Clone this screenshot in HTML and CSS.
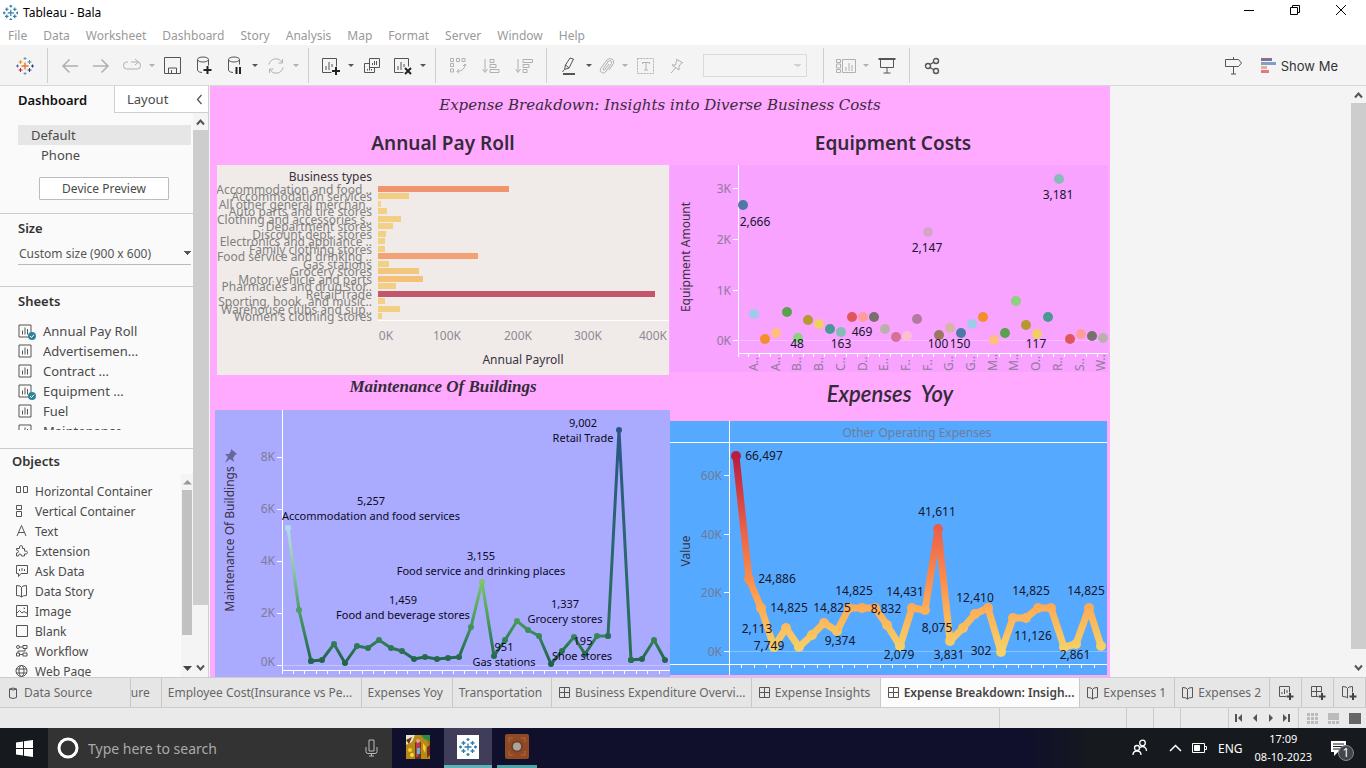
FILE: index.html
```html
<!DOCTYPE html>
<html lang="en">
<head>
<meta charset="utf-8">
<title>Tableau - Bala</title>
<link rel="stylesheet" href="styles.css">
</head>
<body>
<svg class="defs" aria-hidden="true">
  <symbol id="logo" viewBox="0 0 18 18"><path d="M9 5.500v7M5.500 9h7" stroke="#e8762c" stroke-width="1.400"/><path d="M4.500 3v4M2.500 5h4" stroke="#eb912c"/><path d="M13.500 3v4M11.500 5h4" stroke="#5b879b"/><path d="M4.500 11v4M2.500 13h4" stroke="#c72035"/><path d="M13.500 11v4M11.500 13h4" stroke="#1f447e"/><path d="M9 0v3M7.500 1.500h3" stroke="#7099a6"/><path d="M9 15v3M7.500 16.500h3" stroke="#7099a6"/><path d="M1.500 7.500v3M0 9h3" stroke="#5c6692"/><path d="M16.500 7.500v3M15 9h3" stroke="#1f447e"/></symbol>
  <symbol id="bluelogo" viewBox="0 0 18 18"><path d="M9 5.500v7M5.500 9h7M4.500 3v4M2.500 5h4M13.500 3v4M11.500 5h4M4.500 11v4M2.500 13h4M13.500 11v4M11.500 13h4M9 0v3M7.500 1.500h3M9 15v3M7.500 16.500h3M1.500 7.500v3M0 9h3M16.500 7.500v3M15 9h3" stroke="#2f7da8" stroke-width="1.300"/></symbol>
  <symbol id="sheet" viewBox="0 0 14 14"><path d="M1 1h12v12H1zM4.500 6.500v4M7 3.500v7M9.500 5v5.500" fill="none" stroke="currentColor"/></symbol>
  <symbol id="grid" viewBox="0 0 14 14"><path d="M1.500 1.500h10v10h-10zM6.500 1.500v10M1.500 6.500h10" fill="none" stroke="currentColor"/></symbol>
  <symbol id="book" viewBox="0 0 14 14"><path d="M6.500 3.500Q6 1.500 1.500 1.500v10q4 0 5 1.500 1-1.500 5-1.500v-10Q7 1.500 6.500 3.500zV13" fill="none" stroke="currentColor"/></symbol>
  <symbol id="tick" viewBox="0 0 8 8"><circle cx="4" cy="4" r="4" fill="#31839c"/><path d="M2 4l1.500 1.500L6 2.700" fill="none" stroke="#fff"/></symbol>
</svg>
<header class="titlebar">
  <svg class="app-icon" viewBox="-1 -1 20 20"><use href="#bluelogo"/></svg>
  <span class="app-name">Tableau - Bala</span>
  <div class="window-buttons">
    <button aria-label="Minimize"><svg width="12" height="12"><path d="M1 6.500h10" stroke="#000"/></svg></button>
    <button aria-label="Restore"><svg width="12" height="12" fill="none" stroke="#000"><path d="M1.500 3.500h7v7h-7zM3.500 3.500v-2h7v7h-2"/></svg></button>
    <button aria-label="Close"><svg width="12" height="12"><path d="M1 1l10 10M11 1L1 11" stroke="#000"/></svg></button>
  </div>
</header>
<nav class="menubar">
  <a href="#">File</a><a href="#">Data</a><a href="#">Worksheet</a><a href="#">Dashboard</a><a href="#">Story</a><a href="#">Analysis</a><a href="#">Map</a><a href="#">Format</a><a href="#">Server</a><a href="#">Window</a><a href="#">Help</a>
</nav>
<div class="toolbar">
  <button class="tool" aria-label="Start page"><svg width="18" height="18"><use href="#logo"/></svg></button>
  <i class="sep"></i>
  <button class="tool dim" aria-label="Undo"><svg width="18" height="16"><path d="M17 8H2M8.500 1.500L2 8l6.500 6.500" stroke-width="1.500"/></svg></button>
  <button class="tool dim" aria-label="Redo"><svg width="18" height="16"><path d="M1 8h15M9.500 1.500L16 8l-6.500 6.500" stroke-width="1.500"/></svg></button>
  <button class="tool dim" aria-label="Replay"><svg width="20" height="16"><path d="M6 4H4.500Q1.500 4 1.500 7.500T4.500 11h11q3 0 3-3.500T15.500 4H9M13 1l3.500 3L13 7"/></svg></button>
  <button class="caret dim" aria-label="Replay options"></button>
  <button class="tool" aria-label="Save"><svg width="17" height="17"><path d="M.5.500h16v16H.5zM4.500 16v-5h8v5M7.500 13v3"/></svg></button>
  <button class="tool" aria-label="New data source"><svg width="18" height="19"><ellipse cx="8" cy="3.500" rx="5.500" ry="2.500"/><path d="M2.500 3.500v11q1.500 2 4.500 2M13.500 3.500v6"/><path d="M12.500 10v8M8.500 14h8" stroke-width="2" stroke="#222"/></svg></button>
  <button class="tool" aria-label="Pause updates"><svg width="18" height="19"><ellipse cx="8" cy="3.500" rx="5.500" ry="2.500"/><path d="M2.500 3.500v11q1.500 2 4.500 2M13.500 3.500v5"/><path d="M10.500 11v7M14 11v7" stroke-width="2" stroke="#222"/></svg></button>
  <button class="caret" aria-label="Pause options"></button>
  <button class="tool dim" aria-label="Refresh"><svg width="18" height="16"><path d="M2 6.500A7 7 0 0 1 15 4.500M16 9.500A7 7 0 0 1 3 11.500M15.500 1v4h-4M2.500 15v-4h4"/></svg></button>
  <button class="caret dim" aria-label="Refresh options"></button>
  <i class="sep"></i>
  <button class="tool" aria-label="New worksheet"><svg width="20" height="18"><path d="M10.500 15.500h-9v-14h14v8M5 9v4M8 5v8M11 7v3"/><path d="M15 10v8M11 14h8" stroke-width="2" stroke="#222"/></svg></button>
  <button class="caret" aria-label="New options"></button>
  <button class="tool" aria-label="Duplicate"><svg width="18" height="18"><path d="M6.500 1.500h10v9h-10zM6.500 6.500h-5v9h10v-5M4.500 12v1.500M6.500 10v3.500M8.500 12v1.500M9.500 6v2M11.500 4v4M13.500 4v4"/></svg></button>
  <button class="tool" aria-label="Clear sheet"><svg width="20" height="18"><path d="M10.500 15.500h-9v-14h14v8M5 9v4M8 5v8M11 7v3"/><path d="M12 11l6 6M18 11l-6 6" stroke-width="2" stroke="#222"/></svg></button>
  <button class="caret" aria-label="Clear options"></button>
  <i class="sep"></i>
  <div class="sorts">
    <button class="tool dim" aria-label="Swap rows and columns"><svg width="18" height="17"><path d="M1.500 1.500h3v3h-3zM7.500 1.500h3v3h-3zM13 1.500h3v3h-3zM1.500 6.500h3v3h-3zM1.500 12h3v3h-3zM16 7q0 7-8 7.500M14 9l2-2 1.500 2M10 12l-2 2.500 2 2"/></svg></button>
    <button class="tool dim" aria-label="Sort ascending"><svg width="18" height="16"><path d="M3 1v13M.500 11L3 14.500 5.500 11M8 1.500h4v3H8zM8 6.500h6v3H8zM8 11.500h9v3H8z"/></svg></button>
    <button class="tool dim" aria-label="Sort descending"><svg width="18" height="16"><path d="M3 1v13M.500 11L3 14.500 5.500 11M8 1.500h9.500v3H8zM8 6.500h6v3H8zM8 11.500h4v3H8z"/></svg></button>
  </div>
  <i class="sep"></i>
  <button class="tool" aria-label="Highlight"><svg width="16" height="20"><path d="M9 2l3.500 1L8 12l-4.500 1.500L4.500 9zM4.500 9L8 12M3 14l-1.500 2"/><path d="M2 18h12" stroke-width="2"/></svg></button>
  <button class="caret" aria-label="Highlight options"></button>
  <button class="tool narrow dim" aria-label="Group members"><svg width="16" height="18"><path d="M4 12l5.500-8q1.500-1 2.500 0t.500 2.500L6.500 15q-2 2-4 .5t-1-4L8 3q2.500-2.500 5-1t1.500 4.500L10 13M4 12q0 1.500 1.500 1L10 7"/></svg></button>
  <button class="caret dim" aria-label="Group options"></button>
  <button class="tool dim" aria-label="Show mark labels"><svg width="18" height="16"><path d="M.5.500h16v15H.5z" stroke-dasharray="2 1"/><path d="M5.500 6V4.500h7V6M9 4.500v7.500M7 12h4"/></svg></button>
  <button class="tool dim" aria-label="Fix axes"><svg width="16" height="17"><path d="M7 2l7 4M8 3L6.500 8 3 8l7 5v-4l3-3.500M6.500 11L2 16"/></svg></button>
  <select class="fit" aria-label="Fit" disabled><option></option></select>
  <i class="sep"></i>
  <button class="tool dim" aria-label="Show cards"><svg width="22" height="16"><path d="M1.500 1.500h4v3h-4zM1.500 6h4v4h-4zM1.500 11.500h4v3h-4zM7.500 1.500h13v13h-13zM11 9v4M14 5v8M17 7v6"/></svg></button>
  <button class="caret dim" aria-label="Card options"></button>
  <button class="tool" aria-label="Presentation mode"><svg width="18" height="17"><path d="M2.500 2v8.500h13V2M9 10.500V16M5.500 16h7"/><path d="M.500 2h17" stroke-width="2"/></svg></button>
  <i class="sep"></i>
  <button class="tool" aria-label="Share"><svg width="16" height="18" stroke-width="1.400"><circle cx="4" cy="9" r="2.500"/><circle cx="12" cy="4" r="2.500"/><circle cx="12" cy="14" r="2.500"/><path d="M6 7.500L10 5M6 10.500l4 2.500"/></svg></button>
  <span class="grow"></span>
  <button class="tool" aria-label="Guide"><svg width="20" height="20"><path d="M1.500 3.500h13l3 3.500-3 3.500h-13zM9.500 1v2.500M9.500 10.500V18M7 18h5"/></svg></button>
  <button class="show-me"><svg width="15" height="16"><path d="M0 0h11v3H0z" fill="#83709a"/><path d="M0 4h15v3H0z" fill="#7f9fc9"/><path d="M0 8h6v3H0z" fill="#edac8c"/><path d="M0 12h8v3H0z" fill="#e67585"/></svg>Show Me</button>
</div>

<main class="workspace">
  <aside class="sidebar">
    <div class="pane-tabs">
      <button class="pane-tab on">Dashboard</button>
      <button class="pane-tab">Layout <svg width="7" height="11"><path d="M5.500 1L1.500 5.500l4 4.500" fill="none" stroke="#555" stroke-width="1.300"/></svg></button>
    </div>
    <div class="pane-body">
      <div class="pane">
        <section class="devices">
          <a href="#" class="device on">Default</a>
          <a href="#" class="device sub">Phone</a>
          <button class="preview">Device Preview</button>
        </section>
        <section class="size">
          <h3><label for="size">Size</label></h3>
          <select id="size"><option>Custom size (900 x 600)</option></select>
        </section>
        <section class="sheets">
          <h3>Sheets</h3>
          <ul>
            <li><svg class="ico"><use href="#sheet"/></svg><svg class="badge"><use href="#tick"/></svg>Annual Pay Roll</li>
            <li><svg class="ico"><use href="#sheet"/></svg>Advertisemen...</li>
            <li><svg class="ico"><use href="#sheet"/></svg>Contract ...</li>
            <li><svg class="ico"><use href="#sheet"/></svg><svg class="badge"><use href="#tick"/></svg>Equipment ...</li>
            <li><svg class="ico"><use href="#sheet"/></svg>Fuel</li>
            <li><svg class="ico"><use href="#sheet"/></svg>Maintenance...</li>
          </ul>
        </section>
        <section class="objects">
          <h3>Objects</h3>
          <div class="object-box">
            <ul>
              <li><svg class="ico"><path d="M1.500 2.500h4v6h-4zM8.500 2.500h4v6h-4z"/></svg>Horizontal Container</li>
              <li><svg class="ico"><path d="M1.500 1.500h5v4h-5zM1.500 7.500h5v5h-5z"/></svg>Vertical Container</li>
              <li><svg class="ico"><path d="M2 12L6.500 1.500 11 12M3.500 8.500h6"/></svg>Text</li>
              <li><svg class="ico"><path d="M1.500 12V9q2 0 2-1.500T1.500 6V4.500h3q-.5-3 1.500-3t1.500 3h2v2.500q3-.5 3 1.500t-3 1.500V12h-3q0-2-1.500-2t-1.500 2z"/></svg>Extension</li>
              <li><svg class="ico"><path d="M1.500 1.500h11v8H6l-2.500 3v-3h-2zM4.500 5v2M7 4v3M9.500 5v2"/></svg>Ask Data</li>
              <li><svg class="ico"><use href="#book"/></svg>Data Story</li>
              <li><svg class="ico"><path d="M1.500 1.500h11v11h-11zM1.500 9.500l3-3L7 9l2-1.500 3.500 2M8.500 4h1v1"/></svg>Image</li>
              <li><svg class="ico"><path d="M1.500 1.500h11v11h-11z"/></svg>Blank</li>
              <li><svg class="ico"><circle cx="3" cy="3" r="1.500"/><path d="M4.500 3H8M8 1.500h4v3H8zM10 4.500V7H3v2M1.500 9h3v3h-3zM4.500 10.500H8M8 9h4v3H8z"/></svg>Workflow</li>
              <li><svg class="ico"><circle cx="6.500" cy="7" r="5.500"/><ellipse cx="6.500" cy="7" rx="2.500" ry="5.500"/><path d="M1 5h11M1 9h11"/></svg>Web Page</li>
            </ul>
            <div class="scroll small"><svg width="9" height="6"><path d="M0 5.500L4.500 1 9 5.500z" fill="#999"/></svg><i class="thumb"></i><svg width="9" height="6"><path d="M0 0h9L4.500 5z" fill="#444"/></svg></div>
          </div>
        </section>
      </div>
      <div class="scroll"><svg width="9" height="8"><path d="M1 6.500L4.500 2.500 8 6.500"/></svg><i class="thumb"></i><svg width="9" height="8"><path d="M1 1.500l3.500 4L8 1.500"/></svg></div>
    </div>
  </aside>
  <div class="canvas">
    <article class="dashboard">
      <h1>Expense Breakdown: Insights into Diverse Business Costs</h1>
      <div class="views">
        <div class="column">
          <h2>Annual Pay Roll</h2>
          <svg id="payroll" class="chart payroll" viewBox="0 0 452 210"></svg>
          <h2 class="maint-title">Maintenance Of Buildings</h2>
          <svg id="maint" class="chart maint" viewBox="0 0 455 267">
            <defs>
              <linearGradient id="m0" gradientUnits="userSpaceOnUse" x1="0" y1="118" x2="0" y2="251"><stop stop-color="#b4dbe8"/><stop offset=".3" stop-color="#8fc8a8"/><stop offset=".6" stop-color="#4fa065"/><stop offset="1" stop-color="#246650"/></linearGradient>
              <linearGradient id="m1" gradientUnits="userSpaceOnUse" x1="0" y1="172" x2="0" y2="253"><stop stop-color="#7cc56b"/><stop offset=".45" stop-color="#4a9f58"/><stop offset=".7" stop-color="#33825a"/><stop offset="1" stop-color="#216249"/></linearGradient>
              <linearGradient id="m2" gradientUnits="userSpaceOnUse" x1="0" y1="20" x2="0" y2="250"><stop stop-color="#2b5684"/><stop offset=".5" stop-color="#2c6672"/><stop offset="1" stop-color="#287050"/></linearGradient>
            </defs>
          </svg>
        </div>
        <div class="column">
          <h2>Equipment Costs</h2>
          <svg id="equip" class="chart equip" viewBox="0 0 438 207"></svg>
          <h2 class="yoy-title">Expenses&nbsp; Yoy</h2>
          <svg id="yoy" class="chart yoy" viewBox="0 0 437 254">
            <defs>
              <linearGradient id="heat" gradientUnits="userSpaceOnUse" x1="0" y1="35" x2="0" y2="230"><stop stop-color="#b71d3e"/><stop offset=".38" stop-color="#e9624a"/><stop offset=".63" stop-color="#fb8c4c"/><stop offset=".78" stop-color="#fdad56"/><stop offset="1" stop-color="#f6d267"/></linearGradient>
            </defs>
          </svg>
        </div>
      </div>
    </article>
    <div class="scroll"><svg width="9" height="8"><path d="M1 6.500L4.500 2.500 8 6.500"/></svg><i class="thumb"></i><svg width="9" height="8"><path d="M1 1.500l3.500 4L8 1.500"/></svg></div>
  </div>
</main>

<nav class="tabs">
  <a href="#" class="source"><svg class="ico"><path d="M2.500 3v8.500q3.500 2 7 0V3Q6 1 2.500 3zQ6 5 9.500 3"/></svg>Data Source</a>
  <a href="#" class="clipped"><span>ure</span></a>
  <a href="#" class="long">Employee Cost(Insurance vs Pe...</a>
  <a href="#" class="plain">Expenses Yoy</a>
  <a href="#" class="plain">Transportation</a>
  <a href="#" class="long"><svg class="ico"><use href="#grid"/></svg>Business Expenditure Overvi...</a>
  <a href="#" class="medium"><svg class="ico"><use href="#grid"/></svg>Expense Insights</a>
  <a href="#" class="long on"><svg class="ico"><use href="#grid"/></svg>Expense Breakdown: Insigh...</a>
  <a href="#" class="short"><svg class="ico"><use href="#book"/></svg>Expenses 1</a>
  <a href="#" class="short"><svg class="ico"><use href="#book"/></svg>Expenses 2</a>
  <button aria-label="New worksheet"><svg width="18" height="17"><path d="M9 12.500H2.500v-10h10v6M5 8v2M7.500 5v5M10 6v3" fill="none" stroke="#555"/><path d="M13 9v7M9.500 12.500h7" stroke="#444" stroke-width="2"/></svg></button>
  <button aria-label="New dashboard"><svg width="18" height="17"><path d="M9 12.500H2.500v-10h10v6M7.500 2.500v10M2.500 7.500h10" fill="none" stroke="#555"/><path d="M13 9v7M9.500 12.500h7" stroke="#444" stroke-width="2"/></svg></button>
  <button aria-label="New story"><svg width="18" height="17"><path d="M7.500 14Q7 12.500 2.500 12.500v-10Q7 2.500 7.500 4.500 8 2.500 12.500 2.500v6M7.500 4.500V14" fill="none" stroke="#555"/><path d="M13 9v7M9.500 12.500h7" stroke="#444" stroke-width="2"/></svg></button>
</nav>
<footer class="status">
  <i class="cell wide"></i><i class="cell"></i><i class="cell"></i><i class="cell mid"></i>
  <div class="pager">
    <button aria-label="First"><svg width="8" height="8"><path d="M0 0h2v8H0zM7 0v8L3 4z"/></svg></button>
    <button aria-label="Previous"><svg width="8" height="8"><path d="M6 0v8L2 4z"/></svg></button>
    <button aria-label="Next"><svg width="8" height="8"><path d="M2 0v8l4-4z"/></svg></button>
    <button aria-label="Last"><svg width="8" height="8"><path d="M5 0h2v8H5zM0 0v8l4-4z"/></svg></button>
  </div>
  <div class="pager modes">
    <button aria-label="Show tabs"><svg width="12" height="11" fill="#bbb"><path d="M0 0h3v3H0zM4 0h3v3H4zM8 0h3v3H8zM0 4h3v3H0zM4 4h3v3H4zM8 4h3v3H8zM0 8h3v3H0zM4 8h3v3H4zM8 8h3v3H8z"/></svg></button>
    <button aria-label="Show filmstrip"><svg width="12" height="11" fill="#bbb"><path d="M0 0h11v7H0zM0 8h3v3H0zM4 8h3v3H4zM8 8h3v3H8z"/></svg></button>
    <button aria-label="Show sheet sorter"><svg width="12" height="11" fill="#666"><path d="M0 0h12v11H0z"/></svg></button>
  </div>
</footer>
<div class="taskbar">
  <button class="start" aria-label="Start"><svg width="17" height="17" fill="#fff"><path d="M0 2.500l7-1V8H0zM8 1.300L17 0v8H8zM0 9h7v6.500l-7-1zM8 9h9v8l-9-1.300z"/></svg></button>
  <label class="search"><svg width="22" height="22"><circle cx="11" cy="11" r="9" fill="none" stroke="#fff" stroke-width="3"/></svg><input type="text" placeholder="Type here to search" aria-label="Search"><svg width="13" height="18" fill="none" stroke="#bbb"><path d="M4 1h5v11H4zM1 8v4.500q0 2 2 2h7q2 0 2-2V8M6.500 14.500V17M4 17h5"/></svg></label>
  <button class="task" aria-label="Wallpaper"><svg width="24" height="24"><path fill="#9a7412" d="M0 0h24v24H0z"/><path d="M0 24V12Q3 8 6 0h12l6 12v12z" fill="#b88914"/><path d="M0 0h9L6 7 0 10z" fill="#dfe7c8"/><path d="M15 0h9v6l-6-2z" fill="#2c8a4d"/><path d="M0 5l6-3-3 7zM21 12l3-2v10l-3 3z" fill="#7c2c1c"/><path d="M9 24V8q3-6 6 0v16z" fill="#5d3b16"/><circle cx="12" cy="6" r="2" fill="#e7a18e"/><path d="M10 8h4l1 8-3 6h-2z" fill="#b83b5a"/><path d="M11 13h3v6h-3z" fill="#5fb9c9"/><circle cx="4" cy="15" r="2" fill="#efcb38"/><circle cx="6" cy="20" r="2" fill="#f4d84c"/><path d="M17 8l3 4-1 6-2-4z" fill="#f0cf35"/></svg></button>
  <button class="task active" aria-label="Tableau"><svg width="22" height="24"><path fill="#fff" d="M0 0h22v24H0z"/><svg x="2" y="3" width="18" height="18"><use href="#bluelogo"/></svg></svg></button>
  <button class="task open" aria-label="Recorder"><svg width="24" height="25"><rect width="24" height="25" rx="2" fill="#8f4a25"/><path d="M4 8V4h4M16 4h4v4M20 17v4h-4M8 21H4v-4" fill="none" stroke="#a9602f" stroke-width="1.500"/><circle cx="12" cy="12.500" r="6" fill="#75401f"/><circle cx="12" cy="12.500" r="4" fill="#a8a5a5"/></svg></button>
  <span class="grow"></span>
  <div class="tray">
    <svg width="16" height="18" fill="none" stroke="#fff" stroke-width="1.300"><circle cx="10.500" cy="4" r="2.800"/><circle cx="5" cy="9" r="2.500"/><path d="M1 16q0-4 4-4t4 4M8 8.500q3-2 5 0 1.500 1 1.500 3.500"/></svg>
    <svg width="13" height="8" fill="none" stroke="#fff" stroke-width="1.500"><path d="M1 7l5.500-5.500L12 7"/></svg>
    <svg width="16" height="10" fill="none" stroke="#fff"><path d="M.5.500h12v9H.5zM12.500 3.500h2v3h-2"/><path d="M2.500 2.500h5v5h-5z" fill="#fff"/></svg>
    <span>ENG</span>
    <div class="clock"><span>17:09</span><span>08-10-2023</span></div>
    <div class="notes"><svg width="17" height="16"><path d="M1 1h15v11H8l-4 4v-4H1z" fill="#fff"/><path d="M3 4h11M3 6.500h11M3 9h8" stroke="#16191d"/></svg><b>1</b></div>
  </div>
</div>
<script src="charts.js"></script>
</body>
</html>
```
FILE: styles.css
```css
* { box-sizing: border-box; }
body { margin: 0; height: 100vh; display: flex; flex-direction: column; overflow: hidden; background: #fff; color: #4a4a4a; font-family: "Noto Sans", "Open Sans", sans-serif; font-size: 12px; }
button { font: inherit; color: inherit; background: none; border: 0; padding: 0; margin: 0; display: flex; align-items: center; justify-content: center; }
a { color: inherit; text-decoration: none; }
ul { list-style: none; margin: 0; padding: 0; }
h1, h2, h3 { margin: 0; }
svg { flex: none; display: block; }
.defs { display: none; }
.grow { flex: 1; }

.titlebar { flex: none; height: 24px; display: flex; align-items: center; padding-left: 2px; color: #000; }
.app-icon { width: 16px; height: 16px; }
.app-name { margin-left: 5px; }
.window-buttons { margin-left: auto; display: flex; align-self: flex-start; padding-right: 2px; }
.window-buttons button { width: 46px; height: 20px; }
.menubar { flex: none; height: 21px; display: flex; align-items: center; gap: 16px; padding: 2px 0 0 8px; color: #999; }

.toolbar { flex: none; height: 41px; display: flex; align-items: center; padding: 1px 28px 0 9px; background: #f4f4f4; border-bottom: 1px solid #d8d8d8; }
.tool svg { fill: none; stroke: currentColor; }
.tool { width: 31px; height: 30px; color: #555; }
.tool.narrow { width: 26px; }
.tool.dim { color: #b0b0b0; }
.sep { width: 1px; height: 35px; margin: 0 6px 0 7px; background: #cfcfcf; }
.caret { width: 10px; height: 30px; }
.caret::before { content: ""; border: 3px solid transparent; border-top-color: #555; border-bottom: 0; }
.caret.dim::before { border-top-color: #b0b0b0; }
.sorts { display: flex; gap: 2px; }
.fit { width: 104px; height: 23px; margin: 0 9px 0 11px; appearance: none; border: 1px solid #d0d0d0; border-radius: 0; background: linear-gradient(45deg, transparent 50%, #c4c4c4 50%) 90px 9px / 4px 4px no-repeat, linear-gradient(-45deg, transparent 50%, #c4c4c4 50%) 94px 9px / 4px 4px no-repeat, #f4f4f4; }
.show-me { font-family: Inter, sans-serif; font-size: 13px; gap: 5px; margin-left: 11px; color: #333; }

.workspace { flex: 1; min-height: 0; display: flex; }
.sidebar { flex: none; width: 209px; display: flex; flex-direction: column; background: #fafafa; border-right: 1px solid #d0d0d0; }
.pane-tabs { flex: none; display: flex; height: 27px; }
.pane-tab { width: 114px; padding: 0 0 0 18px; justify-content: flex-start; font-size: 13px; }
.pane-tab.on { font-weight: 600; color: #111; }
.pane-tab:not(.on) { flex: 1; padding: 0 5px 0 12px; justify-content: space-between; background: #fff; border: solid #d0d0d0; border-width: 0 0 1px 1px; }
.pane-body { flex: 1; min-height: 0; display: flex; }
.pane { flex: 1; min-width: 0; display: flex; flex-direction: column; }
.pane section { border-bottom: 1px solid #ccc; flex: none; }
.pane h3 { font-size: 13px; line-height: 18px; font-weight: 600; color: #333; }
.devices { height: 101px; padding: 12px 2px 0 18px; }
.device { display: block; height: 20px; line-height: 20px; padding-left: 13px; font-size: 13px; }
.device.on { background: #e6e6e6; }
.device.sub { padding-left: 23px; }
.preview { width: 130px; height: 23px; margin: 12px 0 0 21px; border: 1px solid #bbb; border-radius: 1px; background: #fff; }
.size { height: 73px; padding: 5px 2px 0 18px; }
.size select { display: block; width: 100%; height: 23px; margin-top: 5px; appearance: none; border: 0; border-bottom: 1px solid #bbb; border-radius: 0; padding: 0 0 0 1px; font: inherit; color: #555; background: linear-gradient(45deg, transparent 50%, #555 50%) 165px 9px / 4px 4px no-repeat, linear-gradient(-45deg, transparent 50%, #555 50%) 169px 9px / 4px 4px no-repeat; }
.pane .sheets { height: 162px; padding: 5px 0 18px 18px; display: flex; flex-direction: column; }
.sheets ul { margin-top: 11px; flex: 1; overflow: hidden; }
.sheets li, .objects li { position: relative; display: flex; align-items: center; height: 20px; font-size: 13px; }
.ico { width: 14px; height: 14px; fill: none; stroke: #555; stroke-width: 1; color: #555; }
use { stroke: none; }
.sheets li { gap: 11px; }
.sheets .badge { position: absolute; left: 10px; top: 11px; width: 8px; height: 8px; }
.pane .objects { flex: 1; min-height: 0; border: 0; display: flex; flex-direction: column; padding-top: 3px; }
.objects h3 { padding-left: 12px; }
.object-box { flex: 1; min-height: 0; display: flex; margin-top: 4px; }
.object-box ul { flex: 1; overflow: hidden; padding: 7px 0 0 15px; }
.objects li { gap: 6px; font-size: 12px; }

.scroll { flex: none; width: 15px; display: flex; flex-direction: column; align-items: center; justify-content: space-between; padding: 5px 0; background: #f4f4f4; }
.scroll svg { fill: none; stroke: #555; stroke-width: 2; }
.scroll .thumb { flex: 1; width: 100%; margin: 4px 0 59px; background: #cdcdcd; }
.scroll.small { width: 12px; }
.scroll.small svg { stroke: none; }
.scroll.small .thumb { width: 10px; margin: 5px 0 31px; background: #c1c1c1; }

.canvas { flex: 1; min-width: 0; display: flex; justify-content: space-between; background: #f4f4f4; overflow: hidden; }
.canvas > .scroll .thumb { margin-bottom: 15px; }
.dashboard { flex: 0 1 900px; min-width: 0; background: #ffaaff; margin-left: 1px; color: #3b2a3f; }
.dashboard h1 { height: 37px; text-align: center; font: italic 15px/38px "DejaVu Serif", serif; white-space: nowrap; }
.views { display: grid; grid-template-columns: 460fr 440fr; align-items: start; }
.dashboard h2 { height: 42px; text-align: center; font: 600 19px/40px "Noto Sans", sans-serif; padding-left: 6px; color: #332b38; }
.dashboard .maint-title { height: 35px; font: italic 700 17px/24px "Liberation Serif", serif; }
.dashboard .yoy-title { height: 49px; font: italic 600 22px/44px Lato, sans-serif; padding-left: 0; }
.chart { width: 100%; font-size: 12px; }
.payroll { background: #f0ebe8; width: calc(100% - 8px); margin-left: 7px; }
.maint { background: #aaaaff; width: calc(100% - 5px); margin-left: 5px; }
.equip { background: #f7a3ff; width: calc(100% - 2px); }
.yoy { background: #55aaff; width: calc(100% - 3px); }
.chart .axis { fill: #767080; opacity: .8; }
.chart .payroll-row { fill: #808080; }
.chart .label { font-size: 11px; fill: #0b0b22; }
.chart .name { fill: #3a3240; }
.chart .mark { fill: #16162c; }
.chart .rule { stroke: #fff; stroke-width: 1; }
.chart .faint { stroke: #fff; stroke-opacity: .3; stroke-width: 1; }

.tabs { flex: none; height: 31px; display: flex; background: #e6e6e6; border: solid #ccc; border-width: 1px 0; color: #666; }
.tabs a { display: flex; align-items: center; gap: 3px; padding-left: 6px; border-right: 1px solid #c8c8c8; white-space: nowrap; overflow: hidden; }
.tabs .source { width: 131px; padding-left: 7px; }
.tabs .clipped { width: 31px; padding-left: 0; }
.tabs .long { width: 200px; }
.tabs .medium { width: 129px; }
.tabs .short { width: 95px; }
.tabs .plain { padding: 0 9px 0 6px; }
.tabs .on { background: #fcfcfc; color: #444; font-weight: 600; }
.tabs button { width: 32px; border-right: 1px solid #c8c8c8; }
.status { flex: none; height: 20px; display: flex; justify-content: flex-end; background: #eaeaea; }
.cell { width: 27px; border-left: 1px solid #ccc; }
.cell.wide { width: 127px; }
.cell.mid { width: 48px; }
.pager { width: 70px; display: flex; align-items: center; justify-content: space-between; padding: 0 7px 0 6px; border-left: 1px solid #ccc; fill: #555; }
.pager.modes { width: 68px; padding: 0 5px 0 8px; }

.taskbar { flex: none; height: 40px; display: flex; background: linear-gradient(90deg, #100f2c 0 75%, #16191d 80%); color: #fff; }
.start { width: 48px; background: #16191d; }
.search { width: 344px; display: flex; align-items: center; gap: 9px; padding: 0 14px 0 9px; background: #333; }
.search input { flex: 1; min-width: 0; border: 0; padding: 0; background: none; color: #aaa; font: 14px "Noto Sans", sans-serif; }
.search input::placeholder { color: #aaa; opacity: 1; }
.task { width: 52px; border-bottom: 3px solid transparent; }
.task.active { width: 48px; background: #403d5b; border-bottom-color: #5eb3b8; }
.task.open { width: 40px; margin-left: 5px; border-bottom-color: #4ea3a8; }
.tray { display: flex; align-items: center; padding-right: 10px; }
.tray > svg { margin-right: 21px; }
.tray > svg + svg { margin-right: 10px; }
.clock { display: flex; flex-direction: column; align-items: center; line-height: 18px; margin: 0 18px 0 12px; }
.clock span { font-size: 11px; }
.notes { position: relative; width: 26px; }
.notes b { position: absolute; left: 8px; top: 5px; width: 16px; height: 16px; border-radius: 8px; background: #40464c; border: 1px solid #888; text-align: center; line-height: 14px; font-weight: 400; }
```
FILE: charts.js
```js
const NS = "http://www.w3.org/2000/svg";

function add(svg, tag, attrs, text) {
  const el = document.createElementNS(NS, tag);
  for (const key in attrs) el.setAttribute(key, attrs[key]);
  if (text !== undefined) el.textContent = text;
  svg.appendChild(el);
  return el;
}

// Text whose vertical centre is at y.
function text(svg, x, y, str, cls, anchor = "middle") {
  add(svg, "text", { x, y: y + 4, class: cls, "text-anchor": anchor }, str);
}

function upright(svg, x, y, str, cls, anchor = "middle") {
  add(svg, "text", { x: 0, y: 4, class: cls, "text-anchor": anchor, transform: `translate(${x} ${y}) rotate(-90)` }, str);
}

function rule(svg, d, cls = "rule") {
  add(svg, "path", { d, class: cls, fill: "none" });
}

function ticks(svg, x, y, step, count) {
  let d = "";
  for (let i = 0; i < count; i++) d += `M${Math.round(x + i * step) + 0.5} ${y}v4`;
  rule(svg, d);
}

function line(svg, points, paint, width, dot) {
  add(svg, "polyline", { points: points.join(" "), fill: "none", stroke: paint, "stroke-width": width, "stroke-linejoin": "round", "stroke-linecap": "round" });
  for (const [cx, cy] of points) add(svg, "path", { d: `M${cx} ${cy}v.01`, stroke: paint, "stroke-width": dot, "stroke-linecap": "round" });
}

// Annual Pay Roll
{
  const svg = document.getElementById("payroll");
  const rows = [
    ["Accommodation and food ..", 131, "#f09470"], ["Accommodation services", 31, "#f3cd82"], ["All other general merchan..", 3, "#f3d58a"],
    ["Auto parts and tire stores", 9, "#f3d184"], ["Clothing and accessories s..", 23, "#f3ce83"], ["Department stores", 15, "#f3d184"],
    ["Discount dept. stores", 8, "#f3d184"], ["Electronics and appliance ..", 7, "#f3d184"], ["Family clothing stores", 7, "#f3d184"],
    ["Food service and drinking ..", 100, "#f2a274"], ["Gas stations", 11, "#f3d184"], ["Grocery stores", 41, "#f3c67e"],
    ["Motor vehicle and parts", 45, "#f3c178"], ["Pharmacies and drug stor..", 18, "#f3cf83"], ["Retail Trade", 277, "#c4566c"],
    ["Sporting, book, and  music..", 7, "#f3d184"], ["Warehouse clubs and sup..", 22, "#f3ce83"], ["Women's clothing stores", 4, "#f3d184"]
  ];
  text(svg, 155, 12, "Business types", "name", "end");
  rows.forEach(([name, width, fill], i) => {
    const y = Math.round(24 + i * 7.47);
    text(svg, 155, y + 1, name, "payroll-row", "end");
    add(svg, "rect", { x: 161, y: y - 3, width, height: 6, fill });
  });
  rule(svg, "M161 155.500H452");
  [[169, "0K"], [230, "100K"], [301, "200K"], [371, "300K"], [436, "400K"]].forEach(([x, s]) => text(svg, x, 171, s, "axis"));
  text(svg, 306, 195, "Annual Payroll", "name");
}

// Maintenance Of Buildings
{
  const svg = document.getElementById("maint");
  const ys = [118, 200, 251, 250, 234, 253, 236, 238, 230, 238, 241, 249, 247, 249, 248, 247, 217, 172, 246, 230, 211, 220, 226, 254, 241, 227, 244, 226, 226, 20, 250, 249, 230, 250];
  const points = ys.map((y, i) => [Math.round(73 + i * 11.43), y]);
  rule(svg, "M67 255.500H455", "faint");
  rule(svg, "M67.500 0V264M67 260.500H455");
  ticks(svg, 78, 260, 11.43, 33);
  [[47, "8K"], [99, "6K"], [151, "4K"], [203, "2K"], [252, "0K"]].forEach(([y, s]) => {
    text(svg, 60, y, s, "axis", "end");
    rule(svg, `M62 ${s === "0K" ? 255.5 : y + 0.5}h5`);
  });
  line(svg, points.slice(2, 29), "url(#m1)", 3, 6);
  line(svg, points.slice(0, 3), "url(#m0)", 3, 6);
  line(svg, points.slice(30), "url(#m1)", 3, 6);
  line(svg, points.slice(28, 31), "url(#m2)", 3, 6);
  upright(svg, 15, 129, "Maintenance Of Buildings", "name");
  add(svg, "path", { d: "M16 39l6 5-2 1-2 3 1 4-4-3-5 4 3-6-3-3 4 0 2-3z", fill: "#66669a" });
  [[368, 13, "9,002"], [368, 28, "Retail Trade"], [156, 91, "5,257"], [156, 106, "Accommodation and food services"], [266, 146, "3,155"],
    [266, 161, "Food service and drinking places"], [188, 190, "1,459"], [188, 205, "Food and beverage stores"], [350, 194, "1,337"],
    [350, 209, "Grocery stores"], [289, 237, "951"], [289, 252, "Gas stations"], [368, 231, "195"], [367, 246, "Shoe stores"]
  ].forEach(([x, y, s]) => text(svg, x, y, s, "label"));
}

// Equipment Costs
{
  const svg = document.getElementById("equip");
  const palette = ["#4e79a7", "#a0cbe8", "#f28e2b", "#ffbe7d", "#59a14f", "#8cd17d", "#b6992d", "#f1ce63", "#499894", "#86bcb6", "#e15759", "#ff9d9a", "#79706e", "#bab0ac", "#d37295", "#fabfd2", "#b07aa1", "#d4a6c8", "#9d7660", "#d7b5a6"];
  const ys = [40, 149, 174, 168, 147, 173, 155, 159, 164, 167, 152, 152, 152, 164, 172, 171, 154, 67, 170, 163, 168, 159, 152, 175, 168, 136, 160, 169, 152, 14, 174, 169, 171, 173];
  rule(svg, "M68 175.500H438", "faint");
  rule(svg, "M68.500 0V192M68 188.500H438");
  ticks(svg, 78, 188, 10.9, 33);
  [[24, "3K"], [75, "2K"], [126, "1K"], [176, "0K"]].forEach(([y, s]) => {
    text(svg, 61, y, s, "axis", "end");
    rule(svg, `M63 ${y - 0.5}h5`);
  });
  ys.forEach((cy, i) => add(svg, "circle", { cx: Math.round(73 + i * 10.9), cy, r: 5, fill: palette[i % 20] }));
  [..."AABBCDEFFGGMMORSW"].forEach((s, i) => upright(svg, Math.round(84 + i * 21.7), 206, s + "..", "axis", "start"));
  upright(svg, 16, 92, "Equipment Amount", "name");
  [[85, 57, "2,666"], [388, 30, "3,181"], [257, 83, "2,147"], [127, 179, "48"], [171, 179, "163"], [192, 167, "469"], [268, 179, "100"], [290, 179, "150"], [366, 179, "117"]
  ].forEach(([x, y, s]) => text(svg, x, y, s, "mark"));
}

// Expenses Yoy
{
  const svg = document.getElementById("yoy");
  const ys = [35, 158, 187, 226, 207, 226, 214, 202, 210, 187, 187, 187, 204, 225, 187, 189, 108, 220, 207, 193, 187, 231, 197, 197, 187, 187, 226, 223, 187, 225];
  const points = ys.map((y, i) => [Math.round(66 + i * 12.6), y]);
  rule(svg, "M59 230.500H437", "faint");
  rule(svg, "M0 21.500H437M59.500 0V254M0 243.500H437");
  ticks(svg, 71, 243, 12.6, 29);
  [[55, "60K"], [114, "40K"], [172, "20K"], [231, "0K"]].forEach(([y, s]) => {
    text(svg, 52, y, s, "axis", "end");
    rule(svg, `M54 ${y - 0.5}h5`);
  });
  text(svg, 247, 12, "Other Operating Expenses", "axis");
  line(svg, points, "url(#heat)", 7, 10);
  upright(svg, 16, 130, "Value", "name");
  [[94, 35, "66,497"], [107, 158, "24,886"], [119, 187, "14,825"], [162, 187, "14,825"], [87, 208, "2,113"], [99, 225, "7,749"], [184, 170, "14,825"],
    [170, 220, "9,374"], [216, 188, "8,832"], [235, 171, "14,431"], [229, 234, "2,079"], [267, 91, "41,611"], [267, 207, "8,075"], [279, 234, "3,831"],
    [305, 177, "12,410"], [311, 230, "302"], [363, 215, "11,126"], [361, 170, "14,825"], [416, 170, "14,825"], [405, 234, "2,861"]
  ].forEach(([x, y, s]) => text(svg, x, y, s, "mark"));
}
```
